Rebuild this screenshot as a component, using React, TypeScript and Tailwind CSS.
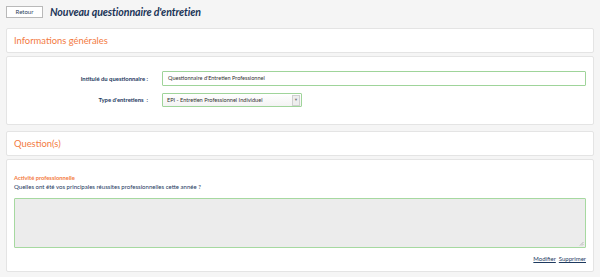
import React from "react";

export default function App() {
  return (
    <div className="w-[600px] h-[277px] overflow-hidden bg-[#f5f5f5] font-['Lato',sans-serif] text-[#1e3a5f]">
      {/* Top bar */}
      <div className="h-[28px] flex items-center pl-[6px] pb-[5px] pt-[1px]">
        <button className="h-[12px] w-[37px] bg-white border border-[#b9b9b9] text-[6px] leading-none text-[#2b3f5c] flex items-center justify-center">
          Retour
        </button>
        <h1 className="ml-[7px] text-[10.6px] font-bold italic text-[#1b3457] leading-none tracking-[-0.1px]">
          Nouveau questionnaire d'entretien
        </h1>
      </div>

      <div className="px-[6px] flex flex-col">
        {/* Panel 1 header */}
        <div className="h-[25px] bg-white border border-[#e4e4e4] rounded-[2px] flex items-center pl-[7px]">
          <span className="text-[9.4px] text-[#f37b3f] leading-none">Informations générales</span>
        </div>
        {/* Panel 1 body */}
        <div className="mt-[3px] h-[69px] bg-white border border-[#e4e4e4] rounded-[2px] pt-[14px] pr-[7px] flex flex-col gap-[7px]">
          <div className="flex items-center">
            <label className="w-[141px] text-right text-[5.9px] font-bold text-[#1e3a5f] leading-none">
              Intitulé du questionnaire :
            </label>
            <div className="ml-[14px] flex-1 h-[15px] border border-[#9fd49a] rounded-[1px] flex items-center pl-[5px] text-[5.55px] text-[#333]">
              Questionnaire d'Entretien Professionnel
            </div>
          </div>
          <div className="flex items-center">
            <label className="w-[141px] text-right text-[5.9px] font-bold text-[#1e3a5f] leading-none">
              Type d'entretiens&nbsp; :
            </label>
            <div className="ml-[14px] w-[140px] h-[14px] border border-[#9fd49a] rounded-[1px] flex items-center bg-gradient-to-b from-white to-[#f3f3f3] text-[5.6px] text-[#333]">
              <span className="flex-1 pl-[4px]">EPI - Entretien Professionnel Individuel</span>
              <span className="w-[8px] h-[11px] mr-[1px] border border-[#d0d0d0] bg-[#eeeeee] flex items-center justify-center text-[4px] text-[#777]">
                ▼
              </span>
            </div>
          </div>
        </div>

        {/* Panel 2 header */}
        <div className="mt-[6px] h-[25px] bg-white border border-[#e4e4e4] rounded-[2px] flex items-center pl-[7px]">
          <span className="text-[9.4px] text-[#f37b3f] leading-none">Question(s)</span>
        </div>
        {/* Panel 2 body */}
        <div className="mt-[3px] h-[113px] bg-white border border-[#e4e4e4] rounded-[2px] pt-[14px] px-[7px]">
          <div className="text-[5.8px] font-bold text-[#f37b3f] leading-[8px]">Activité professionnelle</div>
          <div className="text-[6.05px] text-[#1e3a5f] leading-[9px]">
            Quelles ont été vos principales réussites professionnelles cette année ?
          </div>
          <div className="mt-[7px] h-[50px] bg-[#ececec] border border-[#a6d9a0] rounded-[1px] relative">
            <svg className="absolute right-[1px] bottom-[1px]" width="5" height="5" viewBox="0 0 5 5">
              <path d="M4.5 1 L1 4.5 M4.5 3 L3 4.5" stroke="#999" strokeWidth="0.6" />
            </svg>
          </div>
          <div className="mt-[8px] flex justify-end gap-[3px] text-[6px] text-[#1e3a5f] underline leading-none">
            <span>Modifier</span>
            <span>Supprimer</span>
          </div>
        </div>
      </div>
    </div>
  );
}
